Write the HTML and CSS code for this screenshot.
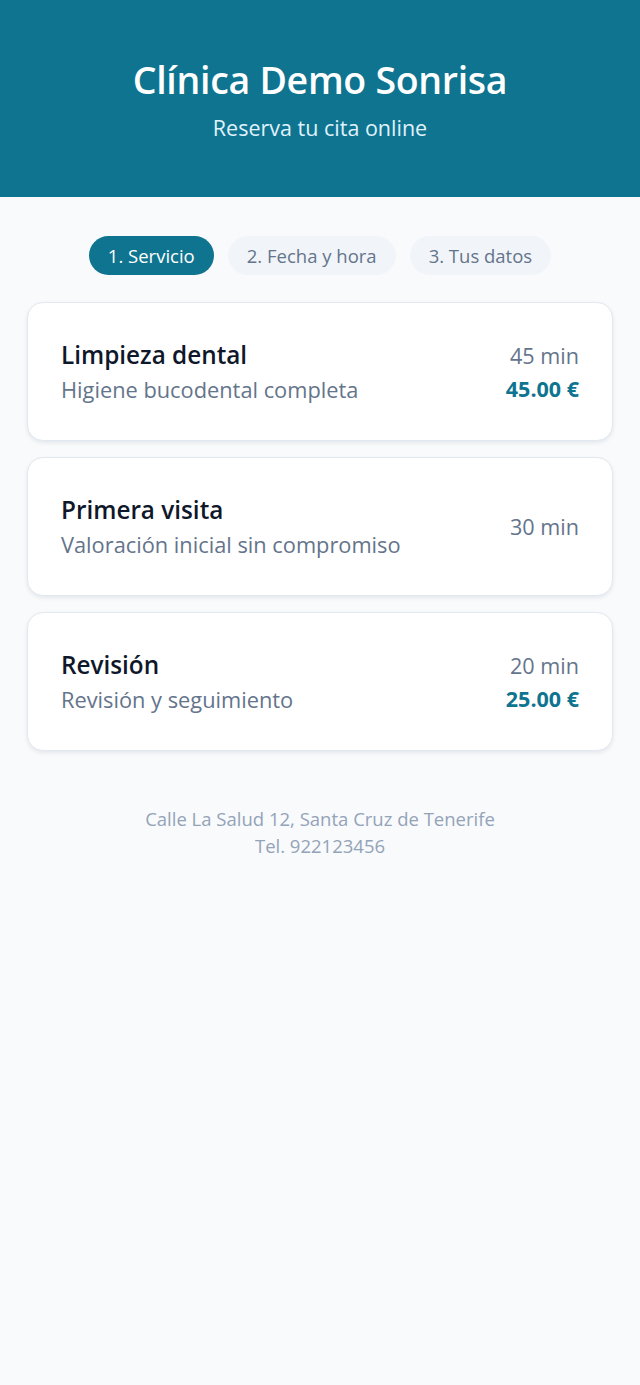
FILE: index.html
```html
<!DOCTYPE html>
<html lang="es">
<head>
<meta charset="utf-8">
<title>Clínica Demo Sonrisa</title>
<link rel="stylesheet" href="styles.css">
</head>
<body>
<header class="hero">
  <h1 class="hero-title">Clínica Demo Sonrisa</h1>
  <p class="hero-sub">Reserva tu cita online</p>
</header>
<main class="main">
  <nav class="steps">
    <span class="step step-active">1. Servicio</span>
    <span class="step">2. Fecha y hora</span>
    <span class="step">3. Tus datos</span>
  </nav>
  <section class="services">
    <div class="card">
      <div class="card-left">
        <div class="card-title">Limpieza dental</div>
        <div class="card-desc">Higiene bucodental completa</div>
      </div>
      <div class="card-right">
        <div class="card-dur">45 min</div>
        <div class="card-price">45.00 €</div>
      </div>
    </div>
    <div class="card">
      <div class="card-left">
        <div class="card-title">Primera visita</div>
        <div class="card-desc">Valoración inicial sin compromiso</div>
      </div>
      <div class="card-right">
        <div class="card-dur">30 min</div>
      </div>
    </div>
    <div class="card">
      <div class="card-left">
        <div class="card-title">Revisión</div>
        <div class="card-desc">Revisión y seguimiento</div>
      </div>
      <div class="card-right">
        <div class="card-dur">20 min</div>
        <div class="card-price">25.00 €</div>
      </div>
    </div>
  </section>
  <footer class="foot">
    <div>Calle La Salud 12, Santa Cruz de Tenerife</div>
    <div>Tel. 922123456</div>
  </footer>
</main>
</body>
</html>
```
FILE: styles.css
```css
* { box-sizing: border-box; }
html, body { margin: 0; padding: 0; }
body {
  background: #f8fafc;
  font-family: "Open Sans", "Noto Sans", "Liberation Sans", sans-serif;
  color: #0f172a;
  min-height: 1385px;
}
.hero {
  background: #0e7490;
  color: #ffffff;
  text-align: center;
  height: 197px;
  padding-top: 55px;
}
.hero-title {
  margin: 0;
  font-size: 37.5px;
  font-weight: 600;
  line-height: 50px;
  letter-spacing: -0.3px;
}
.hero-sub {
  margin: 8px 0 0;
  font-size: 21.5px;
  line-height: 30px;
  color: #e0f2fe;
}
.main {
  padding: 39px 27px 0;
}
.steps {
  display: flex;
  justify-content: center;
  gap: 14px;
}
.step {
  display: inline-flex;
  align-items: center;
  height: 39px;
  padding: 0 19px;
  border-radius: 20px;
  background: #f1f5f9;
  color: #64748b;
  font-size: 18.5px;
}
.step-active {
  background: #0e7490;
  color: #ffffff;
}
.services {
  margin-top: 27px;
  display: flex;
  flex-direction: column;
  gap: 16px;
}
.card {
  display: flex;
  justify-content: space-between;
  align-items: center;
  height: 139px;
  padding: 0 33px;
  background: #ffffff;
  border: 1px solid #e2e8f0;
  border-radius: 16px;
  box-shadow: 0 2px 4px rgba(15, 23, 42, 0.08);
}
.card-title {
  font-size: 24.3px;
  font-weight: 600;
  line-height: 35px;
  color: #0f172a;
}
.card-desc {
  font-size: 21.8px;
  line-height: 35px;
  color: #64748b;
}
.card-right {
  text-align: right;
}
.card-dur {
  font-size: 21.6px;
  line-height: 33px;
  color: #64748b;
}
.card-price {
  font-size: 21.5px;
  line-height: 33px;
  font-weight: 700;
  color: #0e7490;
}
.foot {
  margin-top: 54px;
  text-align: center;
  font-size: 18.5px;
  line-height: 27px;
  color: #94a3b8;
}
```
